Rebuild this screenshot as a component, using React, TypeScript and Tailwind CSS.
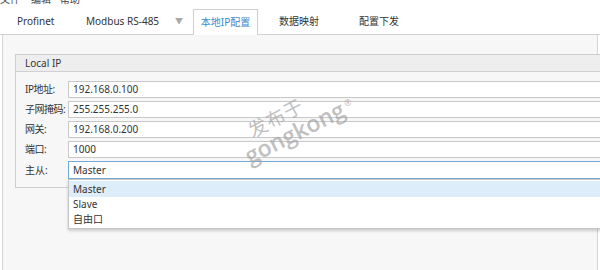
import React from 'react';

const rows = [
  { label: 'IP地址:', value: '192.168.0.100' },
  { label: '子网掩码:', value: '255.255.255.0' },
  { label: '网关:', value: '192.168.0.200' },
  { label: '端口:', value: '1000' },
];

export default function App() {
  return (
    <div
      className="relative w-[600px] h-[270px] overflow-hidden bg-white text-[10px] text-[#333]"
      style={{ fontFamily: '"Noto Sans", "Noto Sans CJK SC", sans-serif' }}
    >
      {/* Menu bar (mostly cut off) */}
      <div className="h-[8px] overflow-hidden">
        <div className="flex -mt-[7px] leading-[12px] text-[#444]">
          <span className="w-[31px]">文件</span>
          <span className="w-[29px]">编辑</span>
          <span>帮助</span>
        </div>
      </div>

      {/* Tabs */}
      <div className="flex h-[27px] items-end border-b border-[#d2d2d2] pl-[17px]">
        <div className="w-[69px] h-[26px] flex items-center">Profinet</div>
        <div className="w-[89px] h-[26px] flex items-center">Modbus RS-485</div>
        <div className="w-[18px] h-[26px] flex items-center text-[#a8a8a8] text-[8px]">▼</div>
        <div className="w-[65px] h-[26px] -mb-px flex items-center justify-center border border-b-0 border-[#cfcfcf] bg-white text-[#3a8ad0]">
          本地IP配置
        </div>
        <div className="ml-[21px] w-[80px] h-[26px] flex items-center">数据映射</div>
        <div className="h-[26px] flex items-center">配置下发</div>
      </div>

      {/* Content */}
      <div className="ml-[2px] mr-[2px] h-[235px] border-l border-r border-[#d6d6d6] bg-[#f7f7f7] pt-[19px] pl-[12px]">
        <div className="w-[620px] border border-[#cfcfcf] bg-[#f7f7f7]">
          <div className="h-[17px] flex items-center border-b border-[#d0d0d0] bg-[#eeeeee] pl-[9px]">
            Local IP
          </div>
          <div className="flex flex-col gap-[3px] pt-[9px] pb-[8px] pl-[9px]">
            {rows.map((r) => (
              <div key={r.label} className="flex items-center">
                <div className="w-[43px] shrink-0 tracking-[-0.5px]">{r.label}</div>
                <div className="flex-1 h-[17px] flex items-center border border-[#c8c8c8] bg-white pl-[4px]">
                  {r.value}
                </div>
              </div>
            ))}
            <div className="relative flex items-center">
              <div className="w-[43px] shrink-0">主从:</div>
              <div className="flex-1 h-[18px] flex items-center border border-[#75a9d8] bg-white pl-[4px]">
                Master
              </div>
              {/* Dropdown list */}
              <div className="absolute left-[43px] top-[18px] z-10 w-[560px] h-[50px] border border-[#c6c6c6] bg-white pt-px shadow-[0_2px_3px_rgba(0,0,0,0.18)]">
                <div className="h-[16px] flex items-center bg-[#ddedf9] pl-[4px]">Master</div>
                <div className="h-[15px] flex items-center pl-[4px]">Slave</div>
                <div className="h-[15px] flex items-center pl-[4px]">自由口</div>
              </div>
            </div>
          </div>
        </div>
      </div>

      {/* Watermark */}
      <div className="pointer-events-none absolute left-[246px] top-[104px] z-20 -rotate-[28deg] text-[19px] text-[#a4a4a4]/70 tracking-[1px]">
        发布于
      </div>
      <div
        className="pointer-events-none absolute left-[240px] top-[115px] z-20 -rotate-[27deg] text-[23px] font-semibold text-[#a4a4a4]/70"
        style={{ fontFamily: '"Open Sans", sans-serif' }}
      >
        gongkong
      </div>
      <div className="pointer-events-none absolute left-[344px] top-[96px] z-20 text-[9px] text-[#a4a4a4]/70">®</div>
    </div>
  );
}
